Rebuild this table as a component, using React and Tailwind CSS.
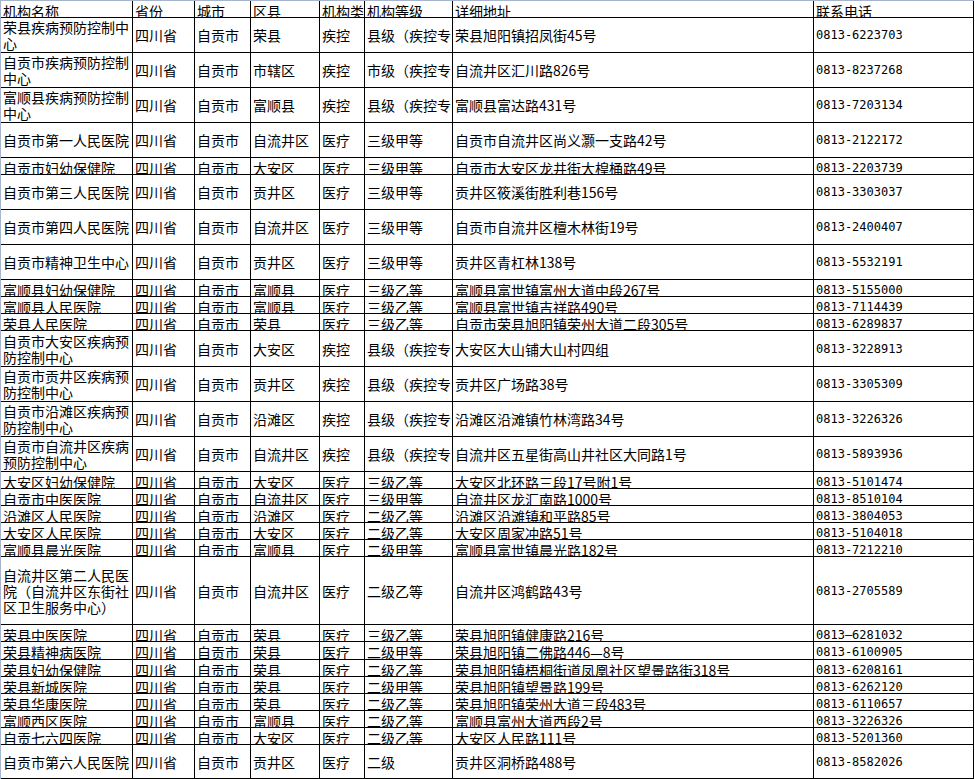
import React from "react";

const heightClass = {
  17: "h-[17px]",
  18: "h-[18px]",
  34: "h-[34px]",
  35: "h-[35px]",
  36: "h-[36px]",
  68: "h-[68px]",
};

const header = ["机构名称", "省份", "城市", "区县", "机构类", "机构等级", "详细地址", "联系电话"];

// [名称, 区县, 类别, 等级, 地址, 电话, 行高]
const rows = [
  ["荣县疾病预防控制中心", "荣县", "疾控", "县级（疾控专", "荣县旭阳镇招凤街45号", "0813-6223703", 35],
  ["自贡市疾病预防控制中心", "市辖区", "疾控", "市级（疾控专", "自流井区汇川路826号", "0813-8237268", 35],
  ["富顺县疾病预防控制中心", "富顺县", "疾控", "县级（疾控专", "富顺县富达路431号", "0813-7203134", 35],
  ["自贡市第一人民医院", "自流井区", "医疗", "三级甲等", "自贡市自流井区尚义灏一支路42号", "0813-2122172", 35],
  ["自贡市妇幼保健院", "大安区", "医疗", "三级甲等", "自贡市大安区龙井街大楻桶路49号", "0813-2203739", 17],
  ["自贡市第三人民医院", "贡井区", "医疗", "三级甲等", "贡井区筱溪街胜利巷156号", "0813-3303037", 35],
  ["自贡市第四人民医院", "自流井区", "医疗", "三级甲等", "自贡市自流井区檀木林街19号", "0813-2400407", 35],
  ["自贡市精神卫生中心", "贡井区", "医疗", "三级甲等", "贡井区青杠林138号", "0813-5532191", 35],
  ["富顺县妇幼保健院", "富顺县", "医疗", "三级乙等", "富顺县富世镇富州大道中段267号", "0813-5155000", 17],
  ["富顺县人民医院", "富顺县", "医疗", "三级乙等", "富顺县富世镇吉祥路490号", "0813-7114439", 17],
  ["荣县人民医院", "荣县", "医疗", "三级乙等", "自贡市荣县旭阳镇荣州大道二段305号", "0813-6289837", 17],
  ["自贡市大安区疾病预防控制中心", "大安区", "疾控", "县级（疾控专", "大安区大山铺大山村四组", "0813-3228913", 36],
  ["自贡市贡井区疾病预防控制中心", "贡井区", "疾控", "县级（疾控专", "贡井区广场路38号", "0813-3305309", 35],
  ["自贡市沿滩区疾病预防控制中心", "沿滩区", "疾控", "县级（疾控专", "沿滩区沿滩镇竹林湾路34号", "0813-3226326", 35],
  ["自贡市自流井区疾病预防控制中心", "自流井区", "疾控", "县级（疾控专", "自流井区五星街高山井社区大同路1号", "0813-5893936", 35],
  ["大安区妇幼保健院", "大安区", "医疗", "三级乙等", "大安区北环路三段17号附1号", "0813-5101474", 17],
  ["自贡市中医医院", "自流井区", "医疗", "三级甲等", "自流井区龙汇南路1000号", "0813-8510104", 17],
  ["沿滩区人民医院", "沿滩区", "医疗", "二级乙等", "沿滩区沿滩镇和平路85号", "0813-3804053", 17],
  ["大安区人民医院", "大安区", "医疗", "二级乙等", "大安区周家冲路51号", "0813-5104018", 17],
  ["富顺县晨光医院", "富顺县", "医疗", "二级甲等", "富顺县富世镇晨光路182号", "0813-7212210", 17],
  ["自流井区第二人民医院（自流井区东街社区卫生服务中心）", "自流井区", "医疗", "二级乙等", "自流井区鸿鹤路43号", "0813-2705589", 68],
  ["荣县中医医院", "荣县", "医疗", "三级乙等", "荣县旭阳镇健康路216号", "0813—6281032", 17],
  ["荣县精神病医院", "荣县", "医疗", "二级甲等", "荣县旭阳镇二佛路446—8号", "0813-6100905", 18],
  ["荣县妇幼保健院", "荣县", "医疗", "二级乙等", "荣县旭阳镇梧桐街道凤凰社区望景路街318号", "0813-6208161", 17],
  ["荣县新城医院", "荣县", "医疗", "二级甲等", "荣县旭阳镇望景路199号", "0813-6262120", 17],
  ["荣县华康医院", "荣县", "医疗", "二级乙等", "荣县旭阳镇荣州大道三段483号", "0813-6110657", 17],
  ["富顺西区医院", "富顺县", "医疗", "二级乙等", "富顺县富州大道西段2号", "0813-3226326", 17],
  ["自贡七六四医院", "大安区", "医疗", "二级乙等", "大安区人民路111号", "0813-5201360", 17],
  ["自贡市第六人民医院", "贡井区", "医疗", "二级", "贡井区洞桥路488号", "0813-8582026", 34],
];

const gridCols = "grid grid-cols-[132px_62px_56px_69px_45px_88px_361px_160px]";

const Cell = ({ children, tall, wrap, phone }) => {
  const base = "border-r border-b border-black overflow-hidden pl-[2px] leading-[16px]";
  const align = tall ? "flex items-center" : "pt-[2px]";
  const text = phone
    ? "font-['DejaVu_Sans_Mono','Noto_Sans_CJK_SC',monospace] text-[12px] pl-[1px]"
    : "text-[14px]";
  return (
    <div className={`${base} ${align} ${text}`}>
      <span className={wrap && tall ? "block w-full" : "whitespace-nowrap"}>{children}</span>
    </div>
  );
};

export default function App() {
  return (
    <div className="w-[975px] h-[779px] bg-white overflow-hidden font-['Noto_Sans_CJK_SC',sans-serif] text-black">
      <div className="w-[974px] border-l border-t border-[#a6b4cc]">
        <div className={`${gridCols} h-[17px]`}>
          {header.map((h, i) => (
            <Cell key={h} phone={false}>{h}</Cell>
          ))}
        </div>
        {rows.map((r) => {
          const tall = r[6] > 18;
          return (
            <div key={r[0]} className={`${gridCols} ${heightClass[r[6]]}`}>
              <Cell tall={tall} wrap>{r[0]}</Cell>
              <Cell tall={tall}>四川省</Cell>
              <Cell tall={tall}>自贡市</Cell>
              <Cell tall={tall}>{r[1]}</Cell>
              <Cell tall={tall}>{r[2]}</Cell>
              <Cell tall={tall}>{r[3]}</Cell>
              <Cell tall={tall}>{r[4]}</Cell>
              <Cell tall={tall} phone>{r[5]}</Cell>
            </div>
          );
        })}
      </div>
    </div>
  );
}
